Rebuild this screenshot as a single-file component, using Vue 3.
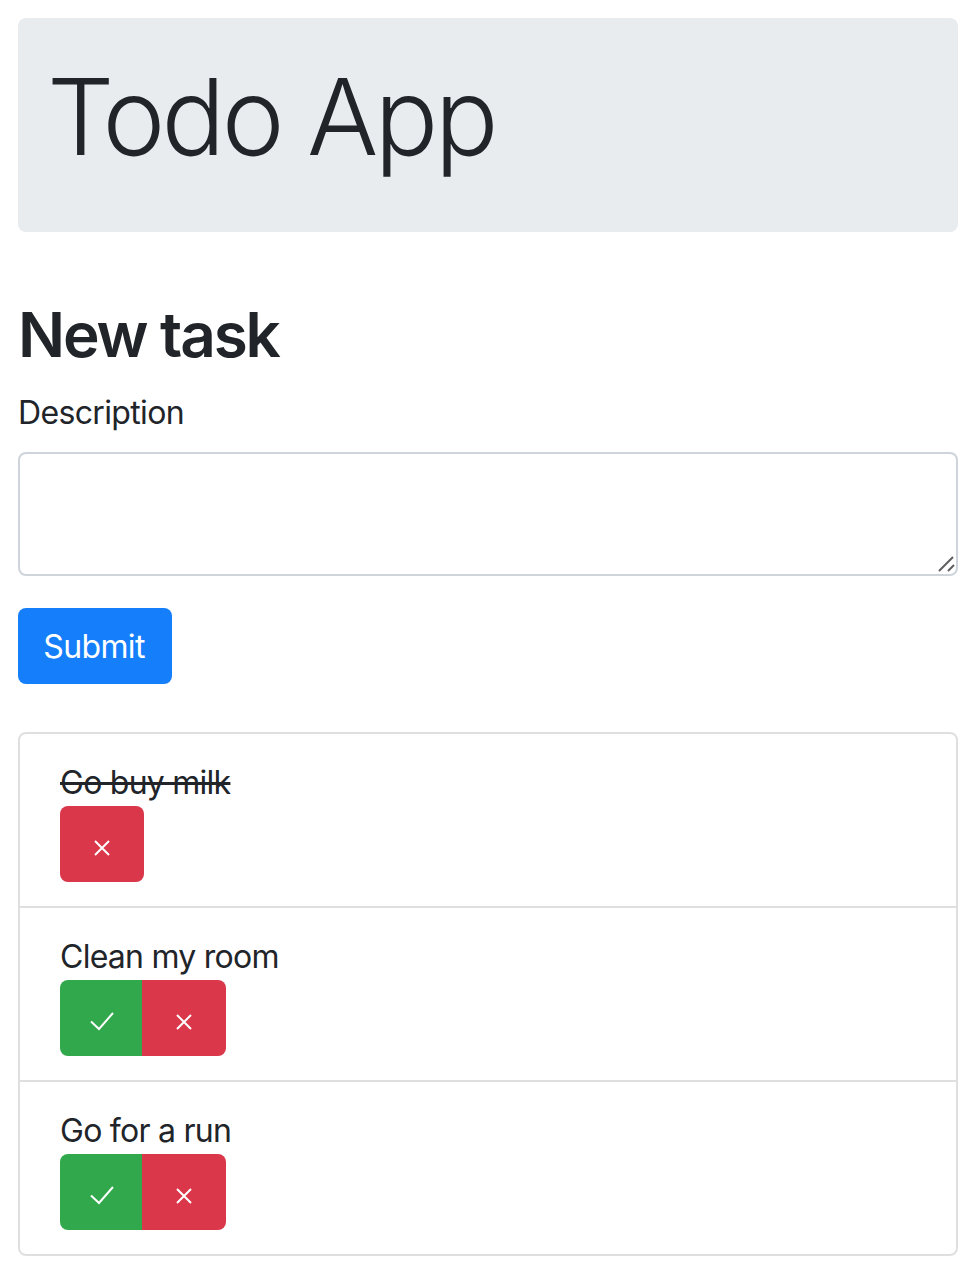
<script setup>
const tasks = [
  { id: 1, text: "Go buy milk", done: true },
  { id: 2, text: "Clean my room", done: false },
  { id: 3, text: "Go for a run", done: false },
];
</script>

<template>
  <div class="container">
    <div class="jumbotron">
      <h1>Todo App</h1>
    </div>

    <h2>New task</h2>
    <form class="task-form" @submit.prevent>
      <label for="description">Description</label>
      <div class="field">
        <textarea id="description"></textarea>
        <svg class="grip" width="20" height="20" viewBox="0 0 20 20" fill="none" stroke="#5f5f5f" stroke-width="2">
          <path d="M4 18 L18 4 M13 18 L19 12" />
        </svg>
      </div>
      <button type="submit" class="submit">Submit</button>
    </form>

    <ul class="list">
      <li v-for="task in tasks" :key="task.id">
        <div class="text" :class="{ done: task.done }">{{ task.text }}</div>
        <div class="actions">
          <button v-if="!task.done" type="button" class="btn ok">
            <svg width="32" height="32" viewBox="0 0 32 32" fill="none" stroke="#fff" stroke-width="2">
              <path d="M6 15.5 L14 23 L28 7" />
            </svg>
          </button>
          <button type="button" class="btn del">
            <svg width="32" height="32" viewBox="0 0 32 32" fill="none" stroke="#fff" stroke-width="2">
              <path d="M9 9 L23 23 M23 9 L9 23" />
            </svg>
          </button>
        </div>
      </li>
    </ul>
  </div>
</template>

<style>
body {
  background: #fff;
}
</style>

<style scoped>
.container {
  padding: 18px 20px 28px 18px;
  font-family: Inter, "Noto Sans", sans-serif;
  font-size: 32px;
  line-height: 48px;
  letter-spacing: -0.65px;
  color: #212529;
}

.jumbotron {
  background: #e9ecef;
  border-radius: 8px;
  padding: 32px;
  margin-bottom: 65px;
}

h1 {
  margin: 0 0 16px -3px;
  font-size: 106px;
  font-weight: 350;
  line-height: 134px;
  letter-spacing: -3.7px;
}

h2 {
  margin: 0 0 16px;
  font-size: 62px;
  font-weight: 600;
  line-height: 75px;
  letter-spacing: -2.1px;
}

label {
  display: block;
  margin-bottom: 14px;
  line-height: 50px;
}

.field {
  position: relative;
  margin-bottom: 32px;
}

textarea {
  display: block;
  box-sizing: border-box;
  width: 100%;
  height: 124px;
  border: 2px solid #ced4da;
  border-radius: 8px;
  background: #fff;
  resize: none;
  outline: none;
}

.grip {
  position: absolute;
  right: 3px;
  bottom: 3px;
  pointer-events: none;
}

.submit {
  display: block;
  width: 154px;
  height: 76px;
  padding: 2px 2px 0 0;
  border: none;
  border-radius: 8px;
  background: #147efb;
  color: #fff;
  font: inherit;
  letter-spacing: inherit;
}

.list {
  list-style: none;
  margin: 48px 0 0;
  padding: 0;
  border: 2px solid #dfdfdf;
  border-radius: 8px;
}

.list li {
  padding: 24px 40px;
}

.list li + li {
  border-top: 2px solid #dfdfdf;
}

.text {
  margin-bottom: -2px;
  line-height: 50px;
  letter-spacing: -0.75px;
}

.done {
  text-decoration: line-through;
}

.actions {
  display: flex;
}

.btn {
  display: flex;
  align-items: center;
  justify-content: center;
  height: 76px;
  width: 84px;
  padding: 8px 0 0;
  border: none;
  border-radius: 8px;
}

.ok {
  width: 82px;
  background: #30a84b;
  border-radius: 8px 0 0 8px;
}

.del {
  background: #da384a;
}

.ok + .del {
  border-radius: 0 8px 8px 0;
}
</style>
